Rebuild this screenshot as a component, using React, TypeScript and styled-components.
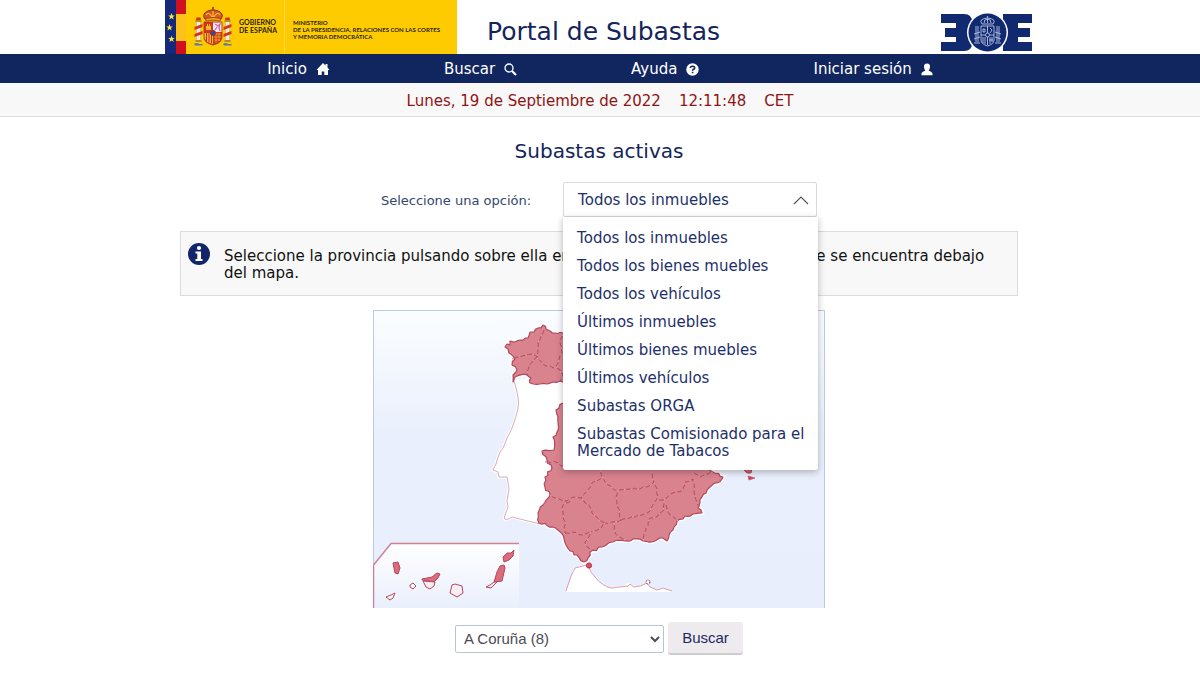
import React, { useState } from "react";
import styled, { createGlobalStyle } from "styled-components";

const GlobalStyle = createGlobalStyle`
  *, *::before, *::after { box-sizing: border-box; }
  body {
    margin: 0;
    background: #fff;
    color: #14245c;
    font: 15px/17px "DejaVu Sans", sans-serif;
  }
`;

const Container = styled.div`
  max-width: 870px;
  margin: 0 auto;
`;

const HeaderRow = styled(Container)`
  display: flex;
  height: 54px;
`;

const Ministry = styled.a`
  display: flex;
  width: 292px;
  background: #fecb00;
  color: #2b2410;
  font: 700 7px/8px Lato, sans-serif;
  text-decoration: none;
`;

const Flags = styled.svg`
  width: 21px;
  height: 54px;
`;

const Crest = styled.svg`
  width: 38px;
  height: 42px;
  margin: 6px 7px 0 8px;
`;

const Government = styled.span`
  width: 46px;
  padding-top: 18px;
  border-right: 1px solid #ffd84a;
`;

const Department = styled.span`
  padding: 19px 0 0 8px;
  font-size: 6px;
  line-height: 7px;
  white-space: nowrap;
`;

const SiteTitle = styled.h1`
  margin: 18px auto 0 30px;
  font-size: 25px;
  line-height: 28px;
  font-weight: 400;
`;

const BoeLink = styled.a`
  margin: 13px 3px 0 0;
  height: 39px;
`;

const Nav = styled.nav`
  display: flex;
  justify-content: center;
  gap: 114px;
  background: #11265f;
`;

const NavLink = styled.a`
  display: flex;
  align-items: center;
  gap: 9px;
  height: 29px;
  padding-top: 1px;
  color: #fff;
  text-decoration: none;
`;

const Clock = styled.div`
  display: flex;
  justify-content: center;
  gap: 18px;
  padding: 10px 0 6px;
  background: #f8f8f8;
  border-bottom: 1px solid #dcdcdc;
  color: #8f1414;
`;

const Main = styled.main`
  max-width: 870px;
  margin: 0 auto;
  padding: 22px 17px 20px 15px;
`;

const Heading = styled.h2`
  margin: 0 0 19px;
  font-size: 20px;
  line-height: 24px;
  font-weight: 400;
  text-align: center;
`;

const FilterRow = styled.div`
  display: flex;
  align-items: center;
  justify-content: center;
  gap: 32px;
`;

const FilterLabel = styled.label`
  padding-top: 2px;
  color: #34466f;
  font-size: 13px;
`;

const Dropdown = styled.div`
  position: relative;
  width: 254px;
`;

const DropdownButton = styled.button`
  display: flex;
  align-items: center;
  justify-content: space-between;
  width: 100%;
  height: 35px;
  padding: 2px 7px 0 14px;
  border: 1px solid #d9d9d9;
  border-radius: 2px;
  background: #fff;
  color: #1d2f6b;
  font: inherit;
`;

const Menu = styled.ul`
  position: absolute;
  z-index: 2;
  top: 100%;
  left: 0;
  width: 255px;
  margin: 0;
  padding: 6px 0;
  list-style: none;
  background: #fff;
  border-radius: 0 0 3px 3px;
  box-shadow: 0 2px 7px rgba(0, 0, 0, 0.28);
`;

const MenuItem = styled.li`
  padding: 7px 6px 4px 14px;
  color: #1d2f6b;
  cursor: pointer;
`;

const Notice = styled.section`
  display: flex;
  gap: 14px;
  margin: 14px 0;
  padding: 11px 7px 13px;
  min-height: 65px;
  background: #f8f8f8;
  border: 1px solid #dcdcdc;
  color: #111;
`;

const NoticeIcon = styled.svg`
  flex: none;
  width: 22px;
  height: 22px;
`;

const NoticeText = styled.p`
  margin: 5px 0 0;
`;

const MapFrame = styled.div`
  display: flex;
  justify-content: center;
`;

const SearchForm = styled.form`
  display: flex;
  align-items: center;
  justify-content: center;
  gap: 4px;
  margin-top: 14px;
`;

const ProvinceSelect = styled.select`
  width: 209px;
  height: 28px;
  padding: 0 0 0 4px;
  border: 1px solid #b9c3da;
  border-radius: 2px;
  background: #fff;
  color: #4d4a55;
  font: 15px "Liberation Sans", sans-serif;
`;

const SearchButton = styled.button`
  width: 75px;
  height: 33px;
  padding: 0;
  border: 0;
  border-bottom: 2px solid #cfcccf;
  border-radius: 3px;
  background: #edebee;
  color: #1d2a60;
  font: 15px "Liberation Sans", sans-serif;
`;

type Point = [number, number];

const parse = (s: string): Point[] =>
  s.split(" ").map((p) => p.split(",").map(Number) as Point);

/* Breaks each segment into short steps with a repeatable wobble, like a surveyed border. */
function rough(s: string, amount = 1.3, closed = false) {
  const pts = parse(s);
  if (closed) pts.push(pts[0]);
  let d = `M${pts[0]}`;
  for (let i = 1; i < pts.length; i++) {
    const [ax, ay] = pts[i - 1];
    const [bx, by] = pts[i];
    const len = Math.hypot(bx - ax, by - ay);
    const steps = Math.max(1, Math.round(len / 3));
    for (let k = 1; k <= steps; k++) {
      const t = k / steps;
      const x = ax + (bx - ax) * t;
      const y = ay + (by - ay) * t;
      const n = k === steps ? 0 : Math.sin(x * 12.9 + y * 78.2) * amount;
      d += `L${(x - ((by - ay) / len) * n).toFixed(1)} ${(y + ((bx - ax) / len) * n).toFixed(1)}`;
    }
  }
  return closed ? d + "Z" : d;
}

const SPAIN =
  "505,347 507,344 510,345 510,341 515,342 520,340 528,338 530,332 534,332 538,328 543,325 546,329 550,331 555,333 563,333 610,336 650,344 690,356 745,368 742,384 715,398 700,425 692,447 702,466 713,472 723,477 717,483 710,487 706,493 702,497 700,503 698,508 702,513 693,514 685,516 677,521 673,530 667,541 660,538 655,541 643,541 633,539 625,541 613,542 602,547 590,552 588,558 584,562 577,555 570,551 566,545 563,535 553,527 539,523 538,513 543,505 550,495 545,487 545,477 552,468 547,460 542,451 554,450 553,437 557,432 558,417 556,410 563,403 580,390 563,382 553,382 547,384 540,384 530,383 531,378 527,375 515,377 513,382 513,375 517,370 512,365 515,359 509,353 508,349";

const BORDERS = [
  "512,359 522,356 532,354 538,357",
  "544,328 542,335 538,342 538,352 536,358 529,365 527,375",
  "537,358 544,365 556,368",
  "563,334 560,342 562,353 556,366 563,374 561,382",
  "545,462 556,462 563,466",
  "600,470 602,478 592,483 586,492 581,498",
  "550,495 561,500 567,501 574,497 581,498 590,507 592,513 599,520 605,523 602,527 591,532",
  "572,500 563,505 563,513 565,525 565,533",
  "563,534 573,532 583,535 591,532",
  "591,532 585,542 586,546 591,551",
  "602,477 608,485 617,491 617,502 621,520 613,522 605,523",
  "617,491 629,489 640,489 649,486 654,482 652,472",
  "654,483 657,489 657,499 650,511 644,514 621,520",
  "614,523 615,533 625,540",
  "657,500 664,500 673,493 683,490 685,482 693,479 694,490 699,507",
  "664,501 664,510 658,516 650,518 648,526 644,533 644,541",
  "665,503 670,515 678,521",
  "692,473 700,477 708,474 713,472",
];

const PORTUGAL =
  "M514 381Q520 400 518 408Q514 426 508 436L503 448Q499 452 496 464L493 470L498 472L499 477L507 477L509 489L507 501L508 507L504 518L506 520L512 517L540 524";

function SpainMap() {
  return (
    <svg width="452" height="298" viewBox="373 310 452 298" role="img" aria-label="Mapa de provincias">
      <defs>
        <linearGradient id="sea" x1="0" y1="0" x2="0" y2="1">
          <stop offset="0" stopColor="#fbfdff" />
          <stop offset="0.42" stopColor="#e9effc" />
          <stop offset="1" stopColor="#e9eefc" />
        </linearGradient>
        <linearGradient id="inset" x1="0" y1="0" x2="0" y2="1">
          <stop offset="0" stopColor="#ffffff" />
          <stop offset="1" stopColor="#e9effc" />
        </linearGradient>
      </defs>
      <rect x="373" y="310" width="452" height="298" fill="url(#sea)" />
      <path d="M373.5 608V310.5H824.5V608" fill="none" stroke="#bccae4" />
      <path d={`${PORTUGAL}L560 520L590 420L563 380Z`} fill="#fff" stroke="#fff" strokeWidth="3" />
      <path d={rough(SPAIN, 1.3, true)} fill="none" stroke="#fff" strokeWidth="4" />
      <path d={PORTUGAL} fill="none" stroke="#dcaab8" />
      <path d={rough(SPAIN, 1.3, true)} fill="#d8838e" stroke="#b4485b" strokeWidth="1.2" strokeLinejoin="round" />
      {BORDERS.map((b) => (
        <g key={b} fill="none" strokeLinejoin="round">
          <path d={rough(b, 0.8)} stroke="#b94a5d" strokeWidth="1" />
          <path d={rough(b, 0.8)} stroke="#efc3ca" strokeWidth="0.8" strokeDasharray="2 5" />
        </g>
      ))}
      <path d="M744 470L752 468L751 473L747 473Z" fill="#d85d6e" stroke="#b4485b" />
      <path d="M748 476L755 478L749 480Z" fill="#c9475a" stroke="#c9475a" strokeWidth="0.6" />
      <path d="M566 592L574 568L587 564L591 571Q597 581 607 587L622 586L629 583L637 587L647 584L650 588L658 590L664 588L673 592Z" fill="#fff" />
      <path d="M566 591L571 576L575 568L587 565M589 568Q591 573 595 577Q602 586 611 588L628 586L630 584L634 587Q640 587 647 583L650 587L657 590L663 588L672 591" fill="none" stroke="#d9a0ad" />
      <circle cx="589" cy="565.5" r="2.6" fill="#d84f61" stroke="#b5384c" />
      <circle cx="648" cy="582" r="2" fill="#fff" stroke="#9c4056" strokeDasharray="2 1" />
      <path d="M373 566L391 543H519V592L519 608H373Z" fill="url(#inset)" />
      <path d="M373.5 608V565L391 543.5H519" fill="none" stroke="#cf8094" strokeWidth="1.5" />
      <g strokeWidth="1" strokeLinejoin="round" stroke="#b4485b">
        <path d="M393 563L398 562L400 568L398 574L395 573Z" fill="#dc6b7b" />
        <path d="M422 579L432 577L437 573L440 574L438 578L434 582L422 580Z" fill="#dc6b7b" />
        <path d="M423 581L435 582L434 586L430 589L426 587Z" fill="#f7edf3" />
        <path d="M410 585L413 583L416 586L413 589L410 587Z" fill="#fff" />
        <path d="M386 597L391 595L395 593L393 598L390 600Z" fill="#fff" />
        <path d="M452 585L455 584L462 586L463 593L457 597L450 593L451 589Z" fill="#f7edf3" />
        <path d="M503 557L507 553L511 553L514 550L513 556L509 560L504 562Z" fill="#dc6b7b" />
        <path d="M497 572L500 566L504 565L505 568L502 581L494 582Z" fill="#dc6b7b" />
        <path d="M494 582L497 582L491 588L486 587L490 585Z" fill="#f7edf3" />
      </g>
    </svg>
  );
}

const STAR = "M0-3.4L.9-1 3.3-1 1.4.5 2.1 2.9 0 1.5-2.1 2.9-1.4.5-3.3-1-.9-1Z";

function FlagStrip() {
  return (
    <Flags viewBox="0 0 21 54" aria-hidden="true">
      <path d="M0 0H11V54H0Z" fill="#14287c" />
      <path d="M11 0H21V14H11ZM11 41H21V54H11Z" fill="#d0101f" />
      <path d="M11 14H21V41H11Z" fill="#fdc21a" />
      {[[6.5, 16.5], [4.5, 27.5], [6.5, 39]].map(([x, y]) => (
        <path key={y} d={STAR} transform={`translate(${x} ${y})`} fill="#f8e936" />
      ))}
    </Flags>
  );
}

function CoatOfArms() {
  return (
    <Crest viewBox="0 0 38 42" aria-hidden="true">
      <path d="M18 2H20M19 1V4M11 13C7 8 13 4 19 4S31 8 27 13Z" fill="#d9552c" stroke="#8c2c18" />
      <path d="M12 9Q15 5 18 11M26 9Q23 5 20 11M19 5V11" fill="none" stroke="#f4bd1e" strokeWidth="1.3" />
      <path d="M11 12.5Q19 10.5 27 12.5L26 15Q19 13.5 12 15Z" fill="#e9a41b" stroke="#8c2c18" strokeWidth=".7" />
      <path d="M10 16H28V31Q28 37 19 39Q10 37 10 31Z" fill="#d0391f" stroke="#a3301c" strokeWidth=".8" />
      <path d="M19 16.5H27.5V26H19Z" fill="#f3e6ea" />
      <path d="M21 18L24 20L26 18L25 22L26 25M21 24L23 21" stroke="#c768ae" strokeWidth="1.3" fill="none" />
      <path d="M12 24V20H13V18H14V20H15V18H16V20H17V24Z" fill="#f0b92a" />
      <path d="M10.5 27H19V38Q10.5 36 10.5 31Z" fill="#f2bb28" />
      <path d="M12.5 27V35M15 27V36M17.5 27V37" stroke="#c92d22" />
      <path d="M20 28H27M20 31H27M20 34H26M22 27V37M25 27V35" stroke="#eab528" strokeWidth=".7" />
      <circle cx="19" cy="27" r="2.6" fill="#2450a0" stroke="#b92d22" />
      {[4.5, 33.5].map((x) => (
        <g key={x} transform={`translate(${x} 0)`}>
          <path d="M-2.5 14L-2 11.5H2L2.5 14Z" fill="#c43a25" />
          <path d="M-2 15H2V35H-2Z" fill="#eee9e4" stroke="#b9a390" strokeWidth=".4" />
          <path d="M-3 14H3V16H-3ZM-3 34H3V36H-3Z" fill="#b98b22" />
          <path d="M-4 21L4 18V21L-4 24ZM-4 28L4 25V28L-4 31Z" fill="#d2321f" />
          <path d="M-4 37.5Q-2 36.5 0 37.5T4 37.5V39.5H-4Z" fill="#5a7ba8" />
        </g>
      ))}
    </Crest>
  );
}

function BoeLogo() {
  return (
    <svg width="91" height="39" viewBox="0 0 91 39">
      <path d="M0 1H23Q31 1 31 9V13Q31 18 26 19.500Q31 21 31 26V30Q31 38 23 38H0V29H15V24H4V15H15V10H0Z" fill="#11296f" />
      <path d="M62 1H91V10H77V15H89V24H77V29H91V38H62Z" fill="#11296f" />
      <circle cx="46.500" cy="19.500" r="20.500" fill="#fff" />
      <circle cx="46.500" cy="19.500" r="19" fill="#11296f" />
      <g fill="none" stroke="#b7c6e6" strokeWidth=".9">
        <path d="M46.500 3V5M41 11Q37 6 46.500 5Q56 6 52 11ZM43 10Q43 6 46.500 6Q50 6 50 10M46.500 6V10" />
        <path d="M40 13H53V27Q53 31 46.500 33Q40 31 40 27ZM46.500 13V32M40 22H53" />
        <path d="M42 19V16H44V19ZM49 15L51 17L49 20M42 24V30M44 24V31M49 24V31M51 24V29M48 27H52" />
        <circle cx="46.500" cy="22" r="2" fill="#11296f" />
        <path d="M34 14H38M35 15V29M37 15V29M33 21L39 19M33 26L39 24M33 30H39M55 14H59M56 15V29M58 15V29M54 19L60 21M54 24L60 26M54 30H60" />
      </g>
    </svg>
  );
}

const HomeIcon = () => (
  <svg width="14" height="12" viewBox="0 0 14 12" aria-hidden="true">
    <path d="M7 0L9.5 2.4V1H11.5V4.4L13.500 7H12V12H8.3V8.500H5.7V12H2V7H.5Z" fill="#fff" />
  </svg>
);

const SearchIcon = () => (
  <svg width="13" height="13" viewBox="0 0 13 13" fill="none" stroke="#fff" aria-hidden="true">
    <circle cx="5" cy="5" r="4" strokeWidth="1.3" />
    <path d="M8 8L12 12" strokeWidth="2.2" />
  </svg>
);

const HelpIcon = () => (
  <svg width="13" height="13" viewBox="0 0 13 13" aria-hidden="true">
    <circle cx="6.5" cy="6.5" r="6.2" fill="#fff" />
    <path d="M4.3 5Q4.4 3.2 6.5 3.2T8.7 4.9Q8.7 5.8 7.5 6.3Q6.6 6.7 6.6 7.7M6.6 8.8V10.3" fill="none" stroke="#11265f" strokeWidth="1.6" />
  </svg>
);

const UserIcon = () => (
  <svg width="12" height="13" viewBox="0 0 12 13" aria-hidden="true">
    <path d="M6 .5C8.3 .5 9.2 2 9 4C8.9 5.700 8.300 6.500 7.800 7.200C7.800 8.300 11.500 8.600 11.500 10.500V12.300H.5V10.500C.5 8.600 4.200 8.300 4.200 7.200C3.700 6.500 3.100 5.700 3 4C2.800 2 3.700 .5 6 .5Z" fill="#fff" />
  </svg>
);

const InfoIcon = () => (
  <NoticeIcon viewBox="0 0 22 22" aria-hidden="true">
    <circle cx="11" cy="11" r="11" fill="#12256a" />
    <circle cx="11" cy="5" r="2.1" fill="#fff" />
    <path d="M7.5 8.500H13V16H14.500V18H7.500V16H9.300V10.500H7.500Z" fill="#fff" />
  </NoticeIcon>
);

const Chevron = ({ open }: { open: boolean }) => (
  <svg width="16" height="9" viewBox="0 0 16 9" fill="none" stroke="#555" aria-hidden="true">
    <path d={open ? "M1 8L8 1L15 8" : "M1 1L8 8L15 1"} strokeWidth="1.2" />
  </svg>
);

const OPTIONS = [
  "Todos los inmuebles",
  "Todos los bienes muebles",
  "Todos los vehículos",
  "Últimos inmuebles",
  "Últimos bienes muebles",
  "Últimos vehículos",
  "Subastas ORGA",
  "Subastas Comisionado para el Mercado de Tabacos",
];

const NAV = [
  { label: "Inicio", Icon: HomeIcon },
  { label: "Buscar", Icon: SearchIcon },
  { label: "Ayuda", Icon: HelpIcon },
  { label: "Iniciar sesión", Icon: UserIcon },
];

export default function App() {
  const [open, setOpen] = useState(true);
  const [selected, setSelected] = useState(OPTIONS[0]);

  return (
    <>
      <GlobalStyle />
      <header>
        <HeaderRow>
          <Ministry href="#ministerio">
            <FlagStrip />
            <CoatOfArms />
            <Government>GOBIERNO<br />DE ESPAÑA</Government>
            <Department>
              MINISTERIO<br />
              DE LA PRESIDENCIA, RELACIONES CON LAS CORTES<br />
              Y MEMORIA DEMOCRÁTICA
            </Department>
          </Ministry>
          <SiteTitle>Portal de Subastas</SiteTitle>
          <BoeLink href="#boe" aria-label="BOE"><BoeLogo /></BoeLink>
        </HeaderRow>
        <Nav>
          {NAV.map(({ label, Icon }) => (
            <NavLink href="#" key={label}>{label}<Icon /></NavLink>
          ))}
        </Nav>
        <Clock>
          <span>Lunes, 19 de Septiembre de 2022</span>
          <span>12:11:48</span>
          <span>CET</span>
        </Clock>
      </header>
      <Main>
        <Heading>Subastas activas</Heading>
        <FilterRow>
          <FilterLabel htmlFor="tipo">Seleccione una opción:</FilterLabel>
          <Dropdown>
            <DropdownButton
              id="tipo"
              type="button"
              aria-haspopup="listbox"
              aria-expanded={open}
              onClick={() => setOpen(!open)}
            >
              {selected}
              <Chevron open={open} />
            </DropdownButton>
            {open && (
              <Menu role="listbox">
                {OPTIONS.map((o) => (
                  <MenuItem
                    key={o}
                    role="option"
                    aria-selected={o === selected}
                    onClick={() => { setSelected(o); setOpen(false); }}
                  >
                    {o}
                  </MenuItem>
                ))}
              </Menu>
            )}
          </Dropdown>
        </FilterRow>
        <Notice>
          <InfoIcon />
          <NoticeText>
            Seleccione la provincia pulsando sobre ella en el mapa, o en el desplegable que se encuentra debajo del mapa.
          </NoticeText>
        </Notice>
        <MapFrame><SpainMap /></MapFrame>
        <SearchForm onSubmit={(e) => e.preventDefault()}>
          <ProvinceSelect aria-label="Provincia" defaultValue="15">
            <option value="15">A Coruña (8)</option>
          </ProvinceSelect>
          <SearchButton type="submit">Buscar</SearchButton>
        </SearchForm>
      </Main>
    </>
  );
}
